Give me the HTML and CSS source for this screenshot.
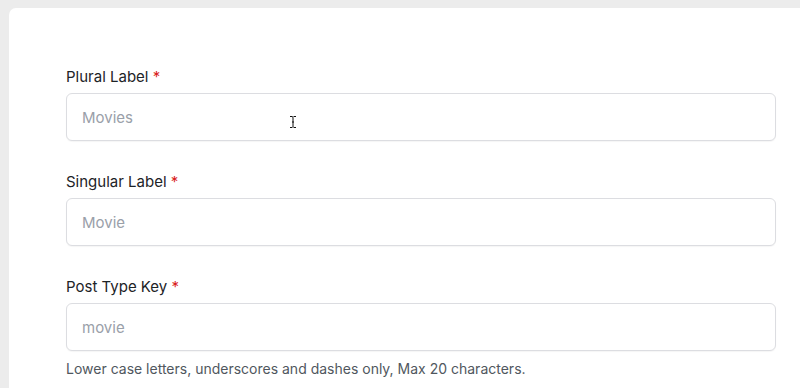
FILE: index.html
```html
<!DOCTYPE html>
<html lang="en">
<head>
<meta charset="utf-8">
<title>Post Type</title>
<link rel="stylesheet" href="styles.css">
</head>
<body>
<main class="card">
  <form class="form">
    <div class="field">
      <label class="label" for="plural">Plural Label <span class="req">*</span></label>
      <input class="input" id="plural" type="text" placeholder="Movies">
    </div>
    <div class="field">
      <label class="label" for="singular">Singular Label <span class="req">*</span></label>
      <input class="input" id="singular" type="text" placeholder="Movie">
    </div>
    <div class="field">
      <label class="label" for="key">Post Type Key <span class="req">*</span></label>
      <input class="input" id="key" type="text" placeholder="movie">
      <p class="help">Lower case letters, underscores and dashes only, Max 20 characters.</p>
    </div>
  </form>
  <svg class="cursor" width="8" height="14" viewBox="0 0 8 14" aria-hidden="true">
    <path d="M1 1.5h2.2L4 2.3l.8-.8H7M1 12.5h2.2l.8-.8.8.8H7M4 2.3v9.4M3 7h2" fill="none" stroke="#fff" stroke-width="2.4"/>
    <path d="M1 1.5h2.2L4 2.3l.8-.8H7M1 12.5h2.2l.8-.8.8.8H7M4 2.3v9.4M3 7h2" fill="none" stroke="#111" stroke-width="1"/>
  </svg>
</main>
</body>
</html>
```

FILE: styles.css
```css
html, body {
  margin: 0;
  padding: 0;
}

body {
  background: #ececec;
  font-family: Inter, "Noto Sans", "Liberation Sans", sans-serif;
  color: #1d2327;
  overflow: hidden;
  height: 388px;
}

.card {
  position: relative;
  box-sizing: border-box;
  height: 380px;
  margin: 8px 0 0 9px;
  background: #ffffff;
  border-radius: 7px 0 0 0;
  padding: 58px 24px 0 57px;
}

.form {
  display: flex;
  flex-direction: column;
  gap: 30px;
}

.field {
  display: flex;
  flex-direction: column;
}

.label {
  font-size: 15px;
  line-height: 21px;
  color: #1d2327;
  margin-bottom: 6px;
}

.req {
  color: #d92020;
}

.input {
  box-sizing: border-box;
  height: 48px;
  width: 100%;
  border: 1px solid #dcdde1;
  border-radius: 6px;
  padding: 0 15px;
  font-family: inherit;
  font-size: 15px;
  color: #1d2327;
  background: #fff;
  box-shadow: 0 1px 1px rgba(0, 0, 0, 0.04);
  outline: none;
}

.input::placeholder {
  color: #9aa0a9;
}

.help {
  margin: 8px 0 0;
  font-size: 14px;
  line-height: 20px;
  color: #50575e;
}

.cursor {
  position: absolute;
  left: 280px;
  top: 107px;
}
```
